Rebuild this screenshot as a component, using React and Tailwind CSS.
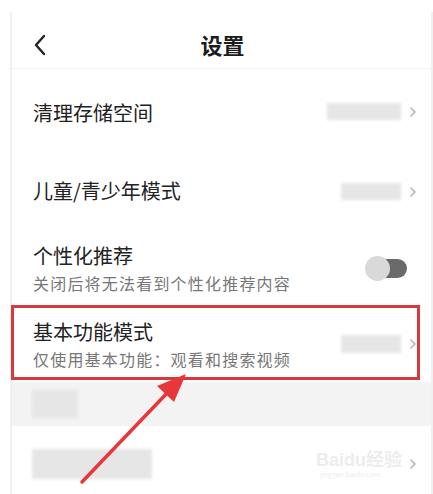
import React from 'react';

const font = { fontFamily: '"Noto Sans CJK SC", "Noto Sans", sans-serif' };

function Chevron() {
  return (
    <svg width="8" height="12" viewBox="0 0 8 12" className="shrink-0">
      <path d="M2 2l4 4-4 4" fill="none" stroke="#b5b5b5" strokeWidth="1.6" strokeLinecap="round" strokeLinejoin="round" />
    </svg>
  );
}

function Blur({ className }) {
  return <div className={`bg-[#e6e6e6] blur-[1.5px] ${className}`} />;
}

export default function App() {
  return (
    <div className="relative w-[433px] h-[494px] overflow-hidden bg-white" style={font}>
      <div className="ml-[10px] mt-[12px] h-[482px] border-l-2 border-r-2 border-[#f0f0f0] flex flex-col">
        {/* Barra superior */}
        <div className="relative h-[57px] flex items-center justify-center border-b border-[#f3f3f3]">
          <svg width="14" height="22" viewBox="0 0 14 22" className="absolute left-[21px] top-[22px]">
            <path d="M11 2L3 11l8 9" fill="none" stroke="#222" strokeWidth="2.4" strokeLinecap="round" strokeLinejoin="round" />
          </svg>
          <span className="text-[22px] font-bold text-[#1c1c1c] mt-[8px] ml-[2px]">设置</span>
        </div>

        {/* Limpar armazenamento */}
        <div className="h-[85px] flex items-center pl-[21px] pr-[14px]">
          <span className="flex-1 text-[20px] text-[#222] mb-[-3px]">清理存储空间</span>
          <Blur className="w-[74px] h-[17px] mr-[8px]" />
          <Chevron />
        </div>

        {/* Modo infantil */}
        <div className="h-[75px] flex items-center pl-[21px] pr-[14px]">
          <span className="flex-1 text-[20px] text-[#222] mb-[2px]">儿童/青少年模式</span>
          <Blur className="w-[60px] h-[17px] mr-[8px]" />
          <Chevron />
        </div>

        {/* Recomendação */}
        <div className="h-[77px] flex items-center pl-[21px] pr-[24px]">
          <div className="flex-1 flex flex-col mt-[3px]">
            <span className="text-[20px] text-[#222] leading-[28px]">个性化推荐</span>
            <span className="text-[16px] tracking-[1.2px] text-[#777] leading-[26px]">关闭后将无法看到个性化推荐内容</span>
          </div>
          <div className="relative w-[42px] h-[24px]">
            <div className="absolute right-0 top-[3px] w-[32px] h-[19px] rounded-full bg-[#6a6a6a]" />
            <div className="absolute left-0 top-0 w-[25px] h-[25px] rounded-full bg-[#d9d9d9]" />
          </div>
        </div>

        {/* Modo básico */}
        <div className="h-[76px] flex items-center pl-[21px] pr-[14px]">
          <div className="flex-1 flex flex-col mt-[1px]">
            <span className="text-[20px] text-[#222] leading-[28px]">基本功能模式</span>
            <span className="text-[16px] tracking-[1.2px] text-[#777] leading-[26px]">仅使用基本功能：观看和搜索视频</span>
          </div>
          <Blur className="w-[60px] h-[18px] mr-[8px]" />
          <Chevron />
        </div>

        {/* Seção cinza */}
        <div className="h-[44px] bg-[#f3f3f3] flex items-center pl-[20px]">
          <Blur className="w-[46px] h-[28px] bg-[#dcdcdc]" />
        </div>

        {/* Último item */}
        <div className="flex-1 flex items-center pl-[20px] pr-[14px]">
          <Blur className="w-[120px] h-[30px] bg-[#d6d6d6] mt-[8px]" />
          <div className="flex-1" />
          <div className="mt-[8px]"><Chevron /></div>
        </div>
      </div>

      {/* Destaque vermelho */}
      <div className="absolute left-[11px] top-[305px] w-[409px] h-[75px] border-[3px] border-[#d63a3c]" />

      {/* Seta */}
      <svg className="absolute left-0 top-0" width="433" height="494" viewBox="0 0 433 494">
        <line x1="82" y1="482" x2="170" y2="390" stroke="#e8373a" strokeWidth="3.5" strokeLinecap="round" />
        <polygon points="186,374 157,386 174,402" fill="#e8373a" />
      </svg>

      {/* Marca d'água */}
      <div className="absolute left-[316px] top-[450px] flex flex-col items-start text-[#ededed]">
        <span className="text-[18px] font-bold leading-[20px]" style={{ fontFamily: '"Liberation Sans", "Noto Sans CJK SC", sans-serif' }}>Baidu经验</span>
        <span className="text-[7px] leading-[9px] ml-[4px]">jingyan.baidu.com</span>
      </div>
    </div>
  );
}
